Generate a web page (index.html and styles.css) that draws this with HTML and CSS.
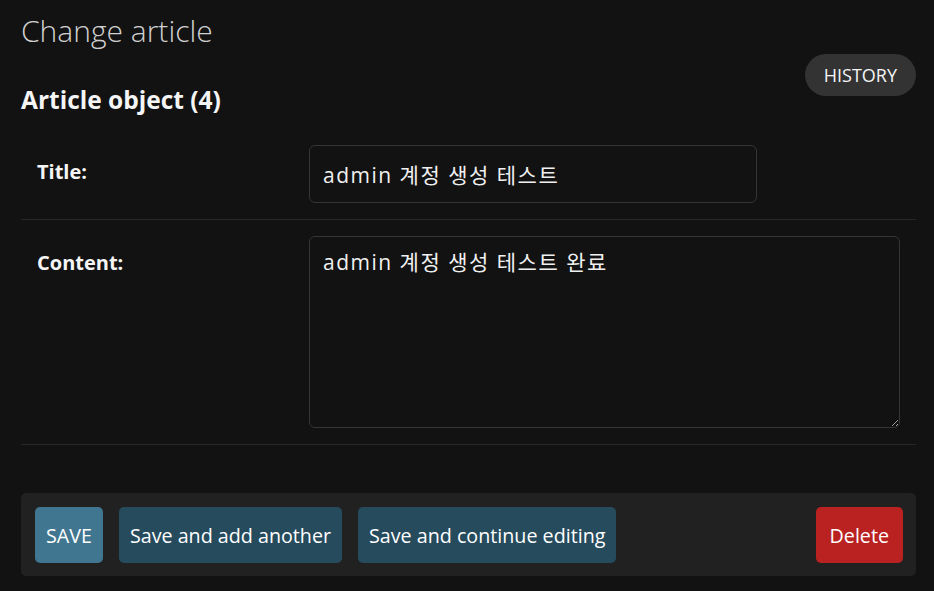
FILE: index.html
```html
<!DOCTYPE html>
<html>

<head>
    <title>Change article</title>
    <link rel="stylesheet" href="styles.css">
</head>

<body>
    <div class="content">
        <h1 class="page-title">Change article</h1>
        <div class="object-head">
            <h2 class="object-name">Article object (4)</h2>
            <a class="history-link" href="#">HISTORY</a>
        </div>

        <form class="change-form">
            <div class="form-row">
                <label class="field-label" for="id_title">Title:</label>
                <input class="field-input" type="text" id="id_title" name="title" value="admin 계정 생성 테스트">
            </div>
            <div class="form-row">
                <label class="field-label" for="id_content">Content:</label>
                <textarea class="field-textarea" id="id_content" name="content">admin 계정 생성 테스트 완료</textarea>
            </div>

            <div class="submit-row">
                <input class="btn btn-default" type="submit" value="SAVE">
                <input class="btn" type="submit" value="Save and add another">
                <input class="btn" type="submit" value="Save and continue editing">
                <a class="btn btn-delete" href="#">Delete</a>
            </div>
        </form>
    </div>
</body>

</html>
```

FILE: styles.css
```css
body {
    margin: 0;
    padding: 0;
    background-color: #121212;
    color: #eeeeee;
    font-family: "Open Sans", "Noto Sans CJK KR", sans-serif;
    color-scheme: dark;
}

.content {
    padding: 10px 18px 0 21px;
}

.page-title {
    margin: 0;
    font-size: 30px;
    font-weight: 300;
    line-height: 42px;
    color: #d0d0d0;
}

.object-head {
    display: flex;
    justify-content: space-between;
    align-items: flex-start;
    margin-top: 2px;
}

.object-name {
    margin: 30px 0 0 0;
    font-size: 24.5px;
    font-weight: 700;
    line-height: 32px;
    color: #f5f5f5;
}

.history-link {
    display: flex;
    align-items: center;
    height: 42px;
    padding: 0 19px;
    border-radius: 21px;
    background-color: #333333;
    color: #f5f5f5;
    font-size: 18px;
    text-decoration: none;
}

.change-form {
    margin-top: 13px;
}

.form-row {
    display: flex;
    align-items: flex-start;
    padding: 16px 16px 16px 16px;
    border-bottom: 1px solid #272727;
}

.field-label {
    width: 272px;
    flex-shrink: 0;
    padding-top: 13px;
    font-size: 20px;
    font-weight: 700;
    line-height: 28px;
    color: #f5f5f5;
}

.field-input,
.field-textarea {
    box-sizing: border-box;
    margin: 0;
    border: 1px solid #353535;
    border-radius: 6px;
    background-color: #121212;
    color: #f0f0f0;
    font-family: "Open Sans", "Noto Sans CJK KR", sans-serif;
    font-size: 21px;
    letter-spacing: 1.5px;
}

.field-input {
    width: 448px;
    height: 58px;
    padding: 0 13px;
}

.field-textarea {
    width: 591px;
    height: 192px;
    padding: 10px 13px;
    line-height: 30px;
    resize: vertical;
}

.submit-row {
    display: flex;
    gap: 16px;
    margin-top: 48px;
    padding: 14px 13px 13px 14px;
    border-radius: 5px;
    background-color: #212121;
}

.btn {
    box-sizing: border-box;
    display: flex;
    align-items: center;
    height: 56px;
    margin: 0;
    padding: 0 11px;
    border: none;
    border-radius: 5px;
    background-color: #264b5d;
    color: #ffffff;
    font-family: "Open Sans", "Noto Sans CJK KR", sans-serif;
    font-size: 19.7px;
    text-decoration: none;
    cursor: pointer;
}

.btn-default {
    background-color: #417690;
}

.btn-delete {
    margin-left: auto;
    padding: 0 14px;
    background-color: #ba2121;
}
```
